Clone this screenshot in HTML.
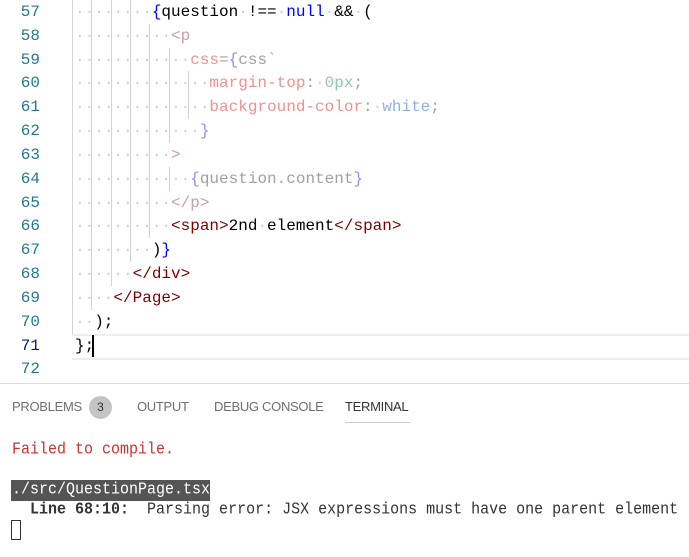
<!DOCTYPE html>
<html><head><meta charset="utf-8"><style>
body{margin:0;width:689px;height:557px;background:#fff;overflow:hidden;position:relative;font-family:"Liberation Mono",monospace;}
.ln{position:absolute;left:0;width:40px;text-align:right;font-size:16px;color:#237893;line-height:24px}
.c{position:absolute;left:75px;font-size:16px;line-height:24px;white-space:pre;color:#000}
.d{color:#d0d0d0}
.g{position:absolute;width:1px;background:#d3d3d3}
.t{color:#800000}.b{color:#0000ff}
.fp{color:#c9a0a0}.fa{color:#f09090}.fb{color:#9090f0}.fn{color:#90c8a8}.fw{color:#90b0e0}.fg{color:#a0a0a0}
.tab{position:absolute;top:399px;font-family:"Liberation Sans",sans-serif;font-size:13px;color:#6f6f6f;letter-spacing:-0.3px}
.term{position:absolute;font-family:"Liberation Mono",monospace;font-size:15px;white-space:pre;line-height:20px;transform:scaleY(1.12);transform-origin:left top}
</style></head><body>
<div style="position:absolute;left:72px;top:334px;width:617px;height:22px;border-top:2px solid #eee;border-bottom:2px solid #eee"></div>
<div style="position:absolute;left:92px;top:335px;width:2px;height:22px;background:#000"></div>

<div class="g" style="left:72px;top:0;height:334px"></div>
<div class="g" style="left:91px;top:0;height:310px"></div>
<div class="g" style="left:111px;top:0;height:286px"></div>
<div class="g" style="left:130px;top:0;height:262px"></div>
<div class="g" style="left:149px;top:24px;height:214px"></div>
<div class="g" style="left:169px;top:48px;height:95px"></div>
<div class="g" style="left:169px;top:167px;height:24px"></div>
<div class="g" style="left:188px;top:71px;height:48px"></div>

<div class="ln" style="top:0">57</div>
<div class="ln" style="top:24px">58</div>
<div class="ln" style="top:48px">59</div>
<div class="ln" style="top:71px">60</div>
<div class="ln" style="top:95px">61</div>
<div class="ln" style="top:119px">62</div>
<div class="ln" style="top:143px">63</div>
<div class="ln" style="top:167px">64</div>
<div class="ln" style="top:191px">65</div>
<div class="ln" style="top:214px">66</div>
<div class="ln" style="top:238px">67</div>
<div class="ln" style="top:262px">68</div>
<div class="ln" style="top:286px">69</div>
<div class="ln" style="top:310px">70</div>
<div class="ln" style="top:334px;color:#0b216f">71</div>
<div class="ln" style="top:357px">72</div>

<div class="c" style="top:0"><span class="d">········</span><span class="b">{</span>question<span class="d">·</span>!==<span class="d">·</span><span class="b">null</span><span class="d">·</span>&amp;&amp;<span class="d">·</span>(</div>
<div class="c" style="top:24px"><span class="d">··········</span><span class="fp">&lt;p</span></div>
<div class="c" style="top:48px"><span class="d">············</span><span class="fa">css</span><span class="fg">=</span><span class="fb">{</span><span class="fg">css`</span></div>
<div class="c" style="top:71px"><span class="d">··············</span><span class="fa">margin-top</span><span class="fg">:</span><span class="d">·</span><span class="fn">0px</span><span class="fg">;</span></div>
<div class="c" style="top:95px"><span class="d">··············</span><span class="fa">background-color</span><span class="fg">:</span><span class="d">·</span><span class="fw">white</span><span class="fg">;</span></div>
<div class="c" style="top:119px"><span class="d">·············</span><span class="fb">}</span></div>
<div class="c" style="top:143px"><span class="d">··········</span><span class="fp">&gt;</span></div>
<div class="c" style="top:167px"><span class="d">············</span><span class="fb">{</span><span class="fg">question.content</span><span class="fb">}</span></div>
<div class="c" style="top:191px"><span class="d">··········</span><span class="fp">&lt;/p&gt;</span></div>
<div class="c" style="top:214px"><span class="d">··········</span><span class="t">&lt;span&gt;</span>2nd<span class="d">·</span>element<span class="t">&lt;/span&gt;</span></div>
<div class="c" style="top:238px"><span class="d">········</span>)<span class="b">}</span></div>
<div class="c" style="top:262px"><span class="d">······</span><span class="t">&lt;/div&gt;</span></div>
<div class="c" style="top:286px"><span class="d">····</span><span class="t">&lt;/Page&gt;</span></div>
<div class="c" style="top:310px"><span class="d">··</span>);</div>
<div class="c" style="top:334px">};</div>

<div style="position:absolute;left:0;top:383px;width:689px;height:1px;background:#ddd"></div>
<div class="tab" style="left:12px">PROBLEMS</div>
<div style="position:absolute;left:89px;top:396px;width:23px;height:23px;border-radius:50%;background:#c4c4c4;color:#333;font-family:'Liberation Sans',sans-serif;font-size:12px;text-align:center;line-height:23px">3</div>
<div class="tab" style="left:137px">OUTPUT</div>
<div class="tab" style="left:214px">DEBUG CONSOLE</div>
<div class="tab" style="left:345px;color:#333">TERMINAL</div>
<div style="position:absolute;left:345px;top:422px;width:65px;height:1px;background:#ccc"></div>

<div class="term" style="left:12px;top:439px;color:#cd3131">Failed to compile.</div>
<div style="position:absolute;left:11px;top:480px;width:199px;height:21px;background:#555"></div>
<div class="term" style="left:12px;top:479px;color:#fff">./src/QuestionPage.tsx</div>
<div class="term" style="left:12px;top:499px;color:#333">  <b>Line 68:10:</b>  Parsing error: JSX expressions must have one parent element</div>
<div style="position:absolute;left:11px;top:520px;width:8px;height:18px;border:1px solid #333"></div>
</body></html>
